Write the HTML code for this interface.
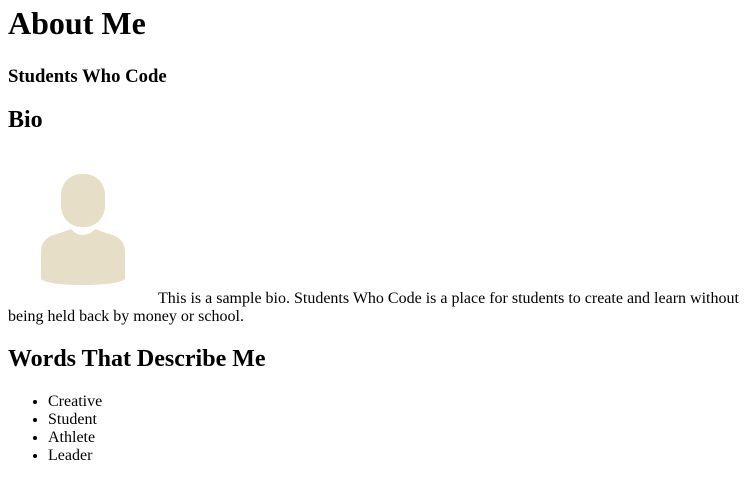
<!DOCTYPE html>
<html><head><meta charset="utf-8"><style>
html,body{background:#fff;}
body{margin:0 8px 8px;font-family:"Liberation Serif",serif;font-size:16px;color:#000;}
h1{font-size:32px;margin:5px 0 23.5px;}
h3{font-size:18.72px;margin:18.72px 0;}
h2{font-size:24px;margin:19.92px 0;}
h2.bio{margin-bottom:18.9px;}
p{margin:16px 0;}
ul{margin:16px 0;padding-left:40px;}
svg{vertical-align:baseline;}
</style></head><body>
<h1>About Me</h1>
<h3>Students Who Code</h3>
<h2 class="bio">Bio</h2>
<p><svg width="150" height="150" viewBox="0 0 150 150"><rect x="53" y="21" width="44" height="53" rx="20" ry="21" fill="#e6dec6"/><path d="M33 98 Q33 84 52 80 L63 76 Q68 82 75 82 Q82 82 87 76 L98 80 Q117 84 117 98 L117 126 Q110 132 75 132 Q40 132 33 126 Z" fill="#e6dec6"/></svg>This is a sample bio. Students Who Code is a place for students to create and learn without being held back by money or school.</p>
<h2>Words That Describe Me</h2>
<ul><li>Creative</li><li>Student</li><li>Athlete</li><li>Leader</li></ul>
</body></html>
